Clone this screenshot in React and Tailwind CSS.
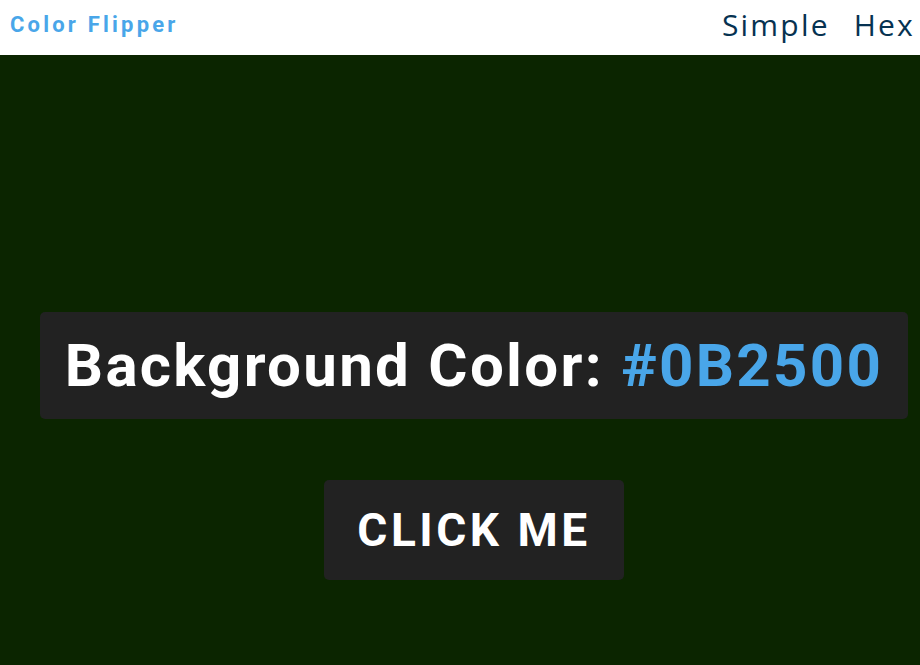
export default function App() {
  return (
    <div className="flex h-[665px] w-[920px] flex-col overflow-hidden bg-[#0B2500]">
      <nav className="flex h-[55px] shrink-0 items-center justify-between bg-white pb-[6px] pl-[10px] pr-[5px]">
        <h4 className="font-['Roboto',sans-serif] text-[22px] font-bold tracking-[3.2px] text-[#49a6e9]">Color Flipper</h4>
        <ul className="flex gap-[24px] font-['Open_Sans',sans-serif] text-[30px] tracking-[2.2px] text-[#063251]">
          <li>Simple</li>
          <li>Hex</li>
        </ul>
      </nav>
      <main className="flex flex-1 flex-col items-center pl-[28px] pt-[257px]">
        <h2 className="rounded-[5px] bg-[#222222] px-[25px] py-[14px] font-['Roboto',sans-serif] text-[60px] font-bold leading-[79px] tracking-[2.3px] text-white">
          Background Color: <span className="text-[#49a6e9]">#0B2500</span>
        </h2>
        <button className="mt-[61px] h-[100px] w-[300px] rounded-[5px] bg-[#222222] font-['Roboto',sans-serif] text-[46px] font-bold tracking-[3.5px] text-white">
          CLICK ME
        </button>
      </main>
    </div>
  );
}
